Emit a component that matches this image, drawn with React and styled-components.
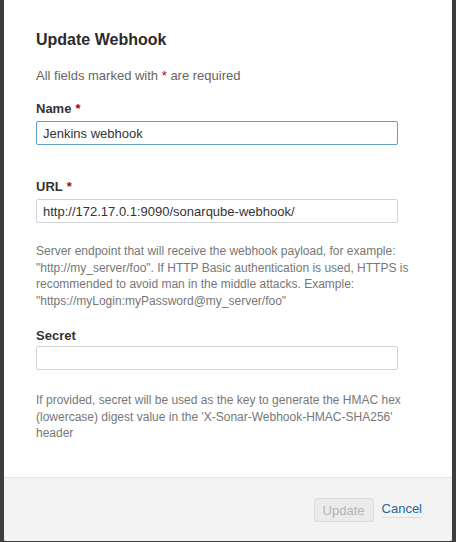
import React from "react";
import styled, { createGlobalStyle } from "styled-components";

const Global = createGlobalStyle`
  html, body { margin: 0; padding: 0; height: 100%; }
  body {
    background: #3d3d3d;
    font-family: "Liberation Sans", Arial, Helvetica, sans-serif;
    color: #333;
  }
  #root { height: 100%; }
`;

const Backdrop = styled.div`
  height: 542px;
  padding: 0 4px 1px 4px;
  box-sizing: border-box;
  display: flex;
`;

const Modal = styled.div`
  flex: 1;
  background: #fff;
  display: flex;
  flex-direction: column;
  border-radius: 0 0 2px 2px;
  overflow: hidden;
`;

const Body = styled.div`
  padding: 28px 32px 0 32px;
  flex: 1;
  display: flex;
  flex-direction: column;
`;

const Title = styled.h2`
  margin: 0;
  font-size: 16px;
  line-height: 24px;
  font-weight: bold;
  color: #2b2b2b;
`;

const Note = styled.p`
  margin: 16px 0 0 0;
  font-size: 13px;
  line-height: 16px;
  color: #666;
`;

const Field = styled.div`
  margin-top: ${(p) => p.$top}px;
  display: flex;
  flex-direction: column;
`;

const Label = styled.label`
  font-size: 13px;
  line-height: 16px;
  font-weight: bold;
  color: #333;
  margin-bottom: ${(p) => p.$gap}px;
`;

const Req = styled.span`
  color: #a4030f;
  margin-left: ${(p) => (p.$inline ? 0 : 4)}px;
`;

const Input = styled.input`
  width: 362px;
  height: 24px;
  box-sizing: border-box;
  border: 1px solid ${(p) => (p.$focus ? "#5e9fc4" : "#cfd3d7")};
  border-radius: 2px;
  padding: 0 6px;
  font-family: "Liberation Sans", Arial, Helvetica, sans-serif;
  font-size: 13px;
  color: #333;
  background: #fff;
  outline: none;
  margin: 0;
`;

const Help = styled.div`
  margin-top: ${(p) => p.$top}px;
  font-size: 12px;
  line-height: 16.7px;
  color: #777;
  width: 390px;
`;

const Footer = styled.div`
  height: 64px;
  box-sizing: border-box;
  border-top: 1px solid #e6e6e6;
  background: #f3f3f3;
  display: flex;
  justify-content: flex-end;
  align-items: flex-start;
  padding: 20px 30px 0 0;
  gap: 8px;
`;

const Button = styled.button`
  height: 24px;
  box-sizing: border-box;
  padding: 0 8px;
  border: 1px solid #dcdcdc;
  border-radius: 2px;
  background: #ebebeb;
  color: #b4b4b4;
  font-family: "Liberation Sans", Arial, Helvetica, sans-serif;
  font-size: 13px;
  cursor: not-allowed;
`;

const LinkBtn = styled.a`
  margin-top: 3px;
  font-size: 13px;
  line-height: 16px;
  color: #236a97;
  text-decoration: none;
  border-bottom: 1px solid #cae3f2;
`;

export default function App() {
  return (
    <>
      <Global />
      <Backdrop>
        <Modal>
          <Body>
            <Title>Update Webhook</Title>
            <Note>
              All fields marked with <Req $inline>*</Req> are required
            </Note>
            <Field $top={17}>
              <Label $gap={4}>
                Name<Req>*</Req>
              </Label>
              <Input $focus defaultValue="Jenkins webhook" />
            </Field>
            <Field $top={34}>
              <Label $gap={4}>
                URL<Req>*</Req>
              </Label>
              <Input defaultValue="http://172.17.0.1:9090/sonarqube-webhook/" />
            </Field>
            <Help $top={20}>
              Server endpoint that will receive the webhook payload, for example:
              "http://my_server/foo". If HTTP Basic authentication is used, HTTPS is
              recommended to avoid man in the middle attacks. Example:
              "https://myLogin:myPassword@my_server/foo"
            </Help>
            <Field $top={18}>
              <Label $gap={2}>Secret</Label>
              <Input />
            </Field>
            <Help $top={22}>
              If provided, secret will be used as the key to generate the HMAC hex
              (lowercase) digest value in the 'X-Sonar-Webhook-HMAC-SHA256'
              header
            </Help>
          </Body>
          <Footer>
            <Button disabled>Update</Button>
            <LinkBtn href="#">Cancel</LinkBtn>
          </Footer>
        </Modal>
      </Backdrop>
    </>
  );
}
